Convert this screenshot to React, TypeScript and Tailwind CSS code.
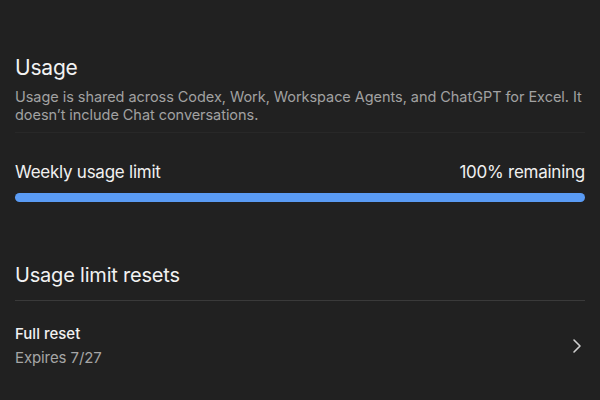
import React from "react";

export default function App() {
  return (
    <div
      className="w-[600px] h-[400px] overflow-hidden bg-[#212121] px-[15px] pt-[54px]"
      style={{ fontFamily: 'Inter, "Noto Sans", sans-serif' }}
    >
      <h1 className="text-[21px] leading-[28px] text-[#f2f2f2] tracking-[-0.2px]">Usage</h1>
      <p className="mt-[6px] text-[14.5px] leading-[17.5px] text-[#a2a2a2] tracking-[-0.05px]">
        Usage is shared across Codex, Work, Workspace Agents, and ChatGPT for Excel. It
        <br />
        doesn’t include Chat conversations.
      </p>
      <div className="mt-[9px] h-px bg-[#282828]" />
      <div className="mt-[28px] flex items-center justify-between text-[17px] leading-[22px] text-[#f0f0f0] tracking-[-0.25px]">
        <span>Weekly usage limit</span>
        <span>100% remaining</span>
      </div>
      <div className="mt-[10px] h-[9px] rounded-full bg-[#5a9bf4]" />
      <h2 className="mt-[60px] text-[20px] leading-[26px] text-[#f2f2f2] tracking-[-0.2px]">
        Usage limit resets
      </h2>
      <div className="mt-[12px] h-px bg-[#3a3a3a]" />
      {[0, 1].map((i) => (
        <div key={i} className="flex items-center justify-between py-[23px]">
          <div className="flex flex-col gap-[4px]">
            <span className="text-[15px] leading-[20px] font-medium text-[#f2f2f2]">Full reset</span>
            <span className="text-[15px] leading-[20px] text-[#a6a6a6] tracking-[-0.1px]">Expires 7/27</span>
          </div>
          <svg width="10" height="16" viewBox="0 0 10 16" className="mr-[3px]">
            <path d="M2 2 L8 8 L2 14" fill="none" stroke="#cfcfcf" strokeWidth="1.6" strokeLinecap="round" strokeLinejoin="round" />
          </svg>
        </div>
      ))}
    </div>
  );
}
